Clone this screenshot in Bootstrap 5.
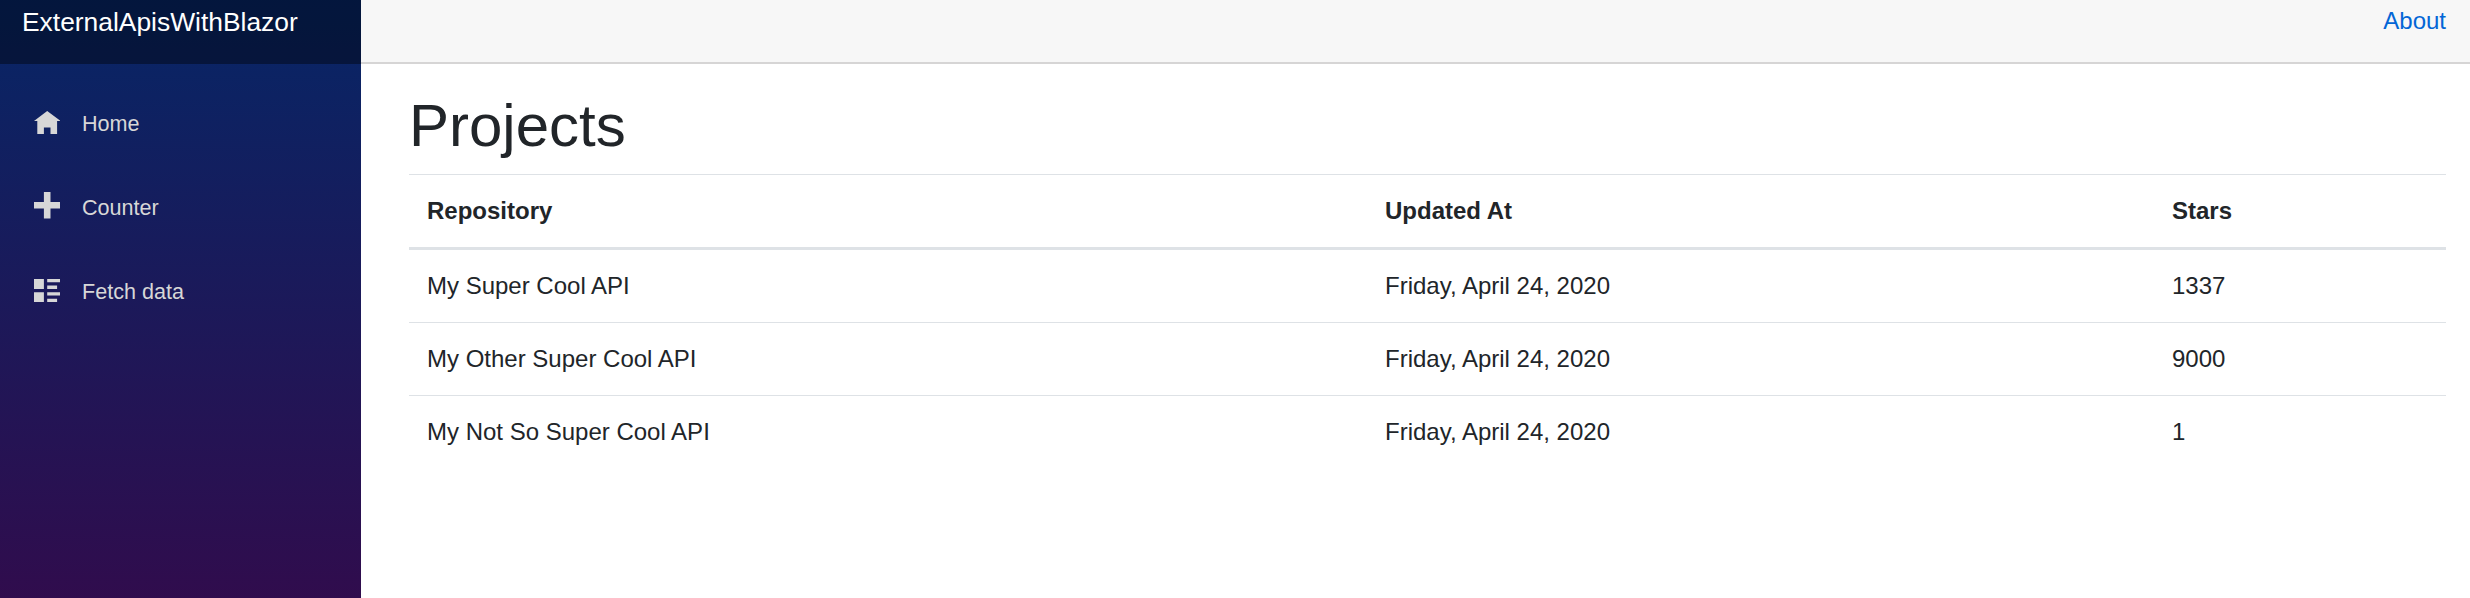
<!DOCTYPE html>
<html lang="en">
<head>
<meta charset="utf-8">
<title>ExternalApisWithBlazor</title>
<link href="https://cdn.jsdelivr.net/npm/bootstrap@5.3.0/dist/css/bootstrap.min.css" rel="stylesheet">
<style>
  body { font-family: "Liberation Sans", Arial, sans-serif; font-size: 24px; color: #212529; background: #fff; overflow: hidden; }
  .sidebar { width: 361px; background: linear-gradient(180deg, rgb(5,39,103) -20px, #3a0647 742px); }
  .brand-row { height: 64px; background: rgba(0,0,0,.4); padding: 2.5px 0 0 22px; }
  .brand-row .navbar-brand { font-size: 26.4px; line-height: 39.6px; padding: 0; margin: 0; color: #fff; }
  .side-nav { padding: 24px 24px 0; }
  .side-nav .nav-item { padding-bottom: 12px; }
  .side-nav .nav-link { height: 72px; padding: 0 0 0 10px; font-size: 21.6px; color: #d7d7d7; }
  .side-nav svg { width: 26.4px; height: 26.4px; margin-right: 21.6px; fill: #d7d7d7; }
  .side-nav .icon-plus { margin-bottom: 5.4px; }
  .top-row { height: 64px; background: #f7f7f7; border-bottom: 2px solid #d6d5d5; padding: 3px 24px 0 48px; }
  .top-row a { color: #0366d6; line-height: 36px; }
  .content { padding: 26px 24px 0 48px; }
  .content h1 { font-size: 60px; line-height: 72px; margin-bottom: 12px; }
  .projects { border-collapse: separate; border-spacing: 0; table-layout: fixed; color: #212529; }
  .projects > :not(caption) > * > * { padding: 18px; line-height: 36px; border: 0 solid #dee2e6; border-top-width: 1px; }
  .projects > thead > tr > th { border-bottom-width: 3px; }
  .projects > tbody > tr:first-child > td { border-top-width: 0; }
  .col-repo { width: 958px; }
  .col-updated { width: 787px; }
</style>
</head>
<body>
<div class="d-flex vh-100">
  <div class="sidebar flex-shrink-0">
    <div class="brand-row"><a class="navbar-brand d-block" href="#">ExternalApisWithBlazor</a></div>
    <ul class="nav flex-column side-nav">
      <li class="nav-item"><a class="nav-link d-flex align-items-center" href="#">
        <svg viewBox="0 0 8 8"><path d="M4 0l-4 3h1v4h2v-2h2v2h2v-4l1 0-4-3z"/></svg>Home</a></li>
      <li class="nav-item"><a class="nav-link d-flex align-items-center" href="#">
        <svg class="icon-plus" viewBox="0 0 8 8"><path d="M3 0v3h-3v2h3v3h2v-3h3v-2h-3v-3h-2z"/></svg>Counter</a></li>
      <li class="nav-item"><a class="nav-link d-flex align-items-center" href="#">
        <svg viewBox="0 0 8 8"><path d="M0 0v3h3v-3h-3zm4 0v1h4v-1h-4zm0 2v1h3v-1h-3zm-4 2v3h3v-3h-3zm4 0v1h4v-1h-4zm0 2v1h3v-1h-3z"/></svg>Fetch data</a></li>
    </ul>
  </div>
  <main class="flex-grow-1">
    <div class="top-row d-flex justify-content-end align-items-start"><a class="text-decoration-none" href="#">About</a></div>
    <div class="content">
      <h1>Projects</h1>
      <table class="table projects">
        <thead>
          <tr><th class="col-repo">Repository</th><th class="col-updated">Updated At</th><th>Stars</th></tr>
        </thead>
        <tbody>
          <tr><td>My Super Cool API</td><td>Friday, April 24, 2020</td><td>1337</td></tr>
          <tr><td>My Other Super Cool API</td><td>Friday, April 24, 2020</td><td>9000</td></tr>
          <tr><td>My Not So Super Cool API</td><td>Friday, April 24, 2020</td><td>1</td></tr>
        </tbody>
      </table>
    </div>
  </main>
</div>
<script src="https://cdn.jsdelivr.net/npm/bootstrap@5.3.0/dist/js/bootstrap.bundle.min.js"></script>
</body>
</html>
